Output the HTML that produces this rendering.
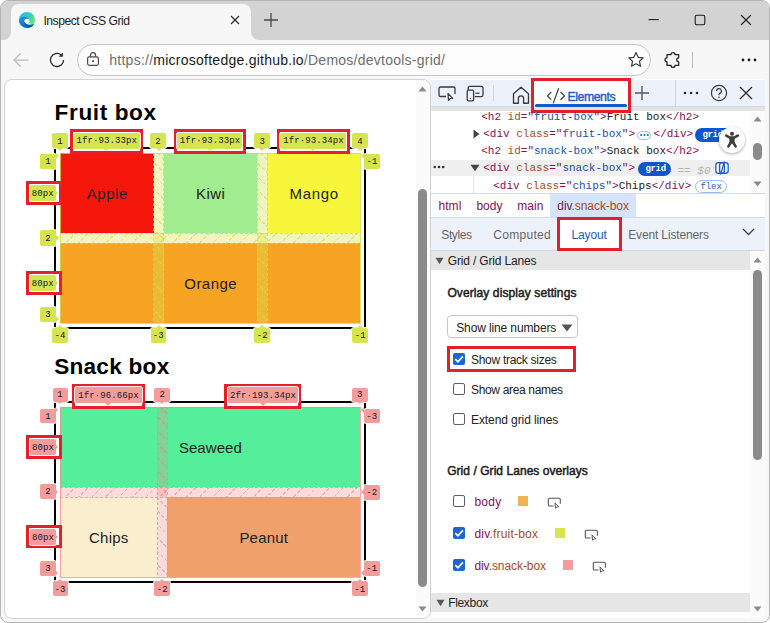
<!DOCTYPE html>
<html><head><meta charset="utf-8">
<style>
*{box-sizing:border-box}
html,body{margin:0;padding:0}
body{width:770px;height:623px;overflow:hidden;position:relative;background:#fff;font-family:"Liberation Sans",sans-serif;color:#1f1f1f}
.a{position:absolute}
.t{white-space:nowrap}
.tg{color:#8a0e55}.an{color:#a64b1e}.av{color:#1a50aa}
</style></head><body>

<div class="a" style="left:0.00px;top:0.00px;width:770.00px;height:623.00px;background:#f7f7f7;border:1px solid #b4b4b4;border-radius:8px"></div>
<div class="a" style="left:1.00px;top:1.00px;width:768.00px;height:39.00px;background:#d3d3d3;border-radius:7px 7px 0 0"></div>
<div class="a" style="left:11.00px;top:4.00px;width:240.00px;height:36.00px;background:#f7f7f7;border-radius:8px 8px 0 0"></div>
<div class="a" style="left:3.00px;top:32.00px;width:8.00px;height:8.00px;background:radial-gradient(circle at 0 0,#d3d3d3 7.5px,#f7f7f7 8.5px)"></div>
<div class="a" style="left:251.00px;top:32.00px;width:8.00px;height:8.00px;background:radial-gradient(circle at 100% 0,#d3d3d3 7.5px,#f7f7f7 8.5px)"></div>
<svg class="a" style="left:19px;top:12px" width="16" height="16" viewBox="0 0 16 16"><defs>
<linearGradient id="eg1" x1="0.1" y1="0.1" x2="0.9" y2="0.7"><stop offset="0" stop-color="#2ab8f2"/><stop offset="0.5" stop-color="#3cc8b8"/><stop offset="1" stop-color="#6be676"/></linearGradient>
<linearGradient id="eg2" x1="0" y1="0.2" x2="0.5" y2="1"><stop offset="0" stop-color="#1e8ee0"/><stop offset="1" stop-color="#1467c0"/></linearGradient>
</defs>
<circle cx="8" cy="8" r="8" fill="url(#eg1)"/>
<path d="M0.1 8.6C0.4 5.6 2.8 4.6 5.4 4.7C7.8 4.8 9.4 5.9 10 7.1L7.6 6.7C6 6.6 5.2 8 5.3 9.3C5.6 11.6 8.1 13 10.9 13C12.5 13 14 12.6 15.2 11.9C13.8 14.5 11.2 16 8 16C3.6 16 0.1 12.6 0.1 8.6Z" fill="url(#eg2)"/>
<path d="M5.3 9.3C5.6 11.6 8.1 13 10.9 13C12.5 13 14 12.6 15.2 11.9C13.9 13.8 11.8 14.9 9.4 14.9C6.8 14.9 5 12.3 5.3 9.3Z" fill="#0c4f9f" opacity="0.75"/>
<path d="M7.6 6.7C9.4 6.4 10.8 7.6 10.6 9.2C10.5 10.3 9.6 11 8.6 11C9.8 11.6 11.4 11.6 12.6 11.2C11.6 12.2 10.2 12.6 8.8 12.3C6.6 11.8 5.2 10.2 5.4 8.6C5.6 7.4 6.5 6.8 7.6 6.7Z" fill="#f2f6f8"/></svg>
<div class="a t" style="left:43.40px;top:13.07px;font-family:'Liberation Sans',sans-serif;font-size:12.2px;line-height:16px;color:#1f1f1f;font-weight:400;letter-spacing:-0.5px;">Inspect CSS Grid</div>
<svg class="a" style="left:230px;top:15px" width="10" height="10" viewBox="0 0 10 10"><path d="M1 1L9 9M9 1L1 9" stroke="#2b2b2b" stroke-width="1.15"/></svg>
<svg class="a" style="left:263px;top:12px" width="16" height="16" viewBox="0 0 16 16"><path d="M8 1V15M1 8H15" stroke="#4a4a4a" stroke-width="1.3"/></svg>
<svg class="a" style="left:648px;top:14px" width="12" height="12" viewBox="0 0 12 12"><path d="M0.5 5.6H10.8" stroke="#1f1f1f" stroke-width="1.1"/></svg>
<svg class="a" style="left:694px;top:14px" width="12" height="12" viewBox="0 0 12 12"><rect x="1.2" y="1.2" width="9.6" height="9.6" rx="1.6" fill="none" stroke="#1f1f1f" stroke-width="1.1"/></svg>
<svg class="a" style="left:740px;top:14px" width="12" height="12" viewBox="0 0 12 12"><path d="M1 1L11 11M11 1L1 11" stroke="#1f1f1f" stroke-width="1.1"/></svg>
<svg class="a" style="left:12px;top:52px" width="18" height="16" viewBox="0 0 18 16"><path d="M16.5 8H2M8.5 1.5L2 8L8.5 14.5" fill="none" stroke="#bcbcbc" stroke-width="1.25"/></svg>
<svg class="a" style="left:49px;top:51px" width="16" height="17" viewBox="0 0 16 17"><path d="M14.55 8.9A6.55 6.55 0 1 1 12.2 3.9" fill="none" stroke="#262626" stroke-width="1.3"/><path d="M13.7 1.9V5.4H10.2Z" fill="#262626" stroke="#262626" stroke-width="0.5" stroke-linejoin="round"/></svg>
<div class="a" style="left:77.00px;top:44.00px;width:574.00px;height:32.00px;border:1px solid #c7c7c7;border-radius:16px;background:#fdfdfd"></div>
<svg class="a" style="left:86px;top:51px" width="14" height="16" viewBox="0 0 14 16"><path d="M4.4 5.8V4.2A2.6 2.6 0 0 1 9.6 4.2V5.8" fill="none" stroke="#4a4a4a" stroke-width="1.2"/><rect x="1.6" y="5.8" width="10.8" height="8.6" rx="1.8" fill="none" stroke="#4a4a4a" stroke-width="1.2"/><rect x="6.1" y="9.2" width="1.8" height="1.8" fill="#4a4a4a"/></svg>
<div class="a t" style="left:109.30px;top:51.05px;font-family:'Liberation Sans',sans-serif;font-size:14px;line-height:18px;color:#6e6e6e;font-weight:400;letter-spacing:0.25px;">https://<span style="color:#1b1b1b">microsoftedge.github.io</span>/Demos/devtools-grid/</div>
<svg class="a" style="left:627px;top:51px" width="18" height="18" viewBox="0 0 18 18"><path d="M9 1.6L11.2 6.3L16.2 6.9L12.5 10.3L13.5 15.3L9 12.8L4.5 15.3L5.5 10.3L1.8 6.9L6.8 6.3Z" fill="none" stroke="#3a3a3a" stroke-width="1.2" stroke-linejoin="round"/></svg>
<svg class="a" style="left:663px;top:51px" width="18" height="18" viewBox="0 0 18 18"><path d="M4 3.6H8A2 2 0 0 1 12 3.6H15.7V6.8A2 2 0 0 0 15.7 10.8V14.4H12A2 2 0 0 1 8 14.4H4V10.8A2 2 0 0 1 4 6.8Z" fill="none" stroke="#1f1f1f" stroke-width="1.25" stroke-linejoin="round"/></svg>
<div class="a" style="left:692.00px;top:52.00px;width:1.00px;height:16.00px;background:#bdbdbd"></div>
<svg class="a" style="left:740px;top:56px" width="18" height="8" viewBox="0 0 18 8"><circle cx="3" cy="4" r="1.4" fill="#1f1f1f"/><circle cx="9" cy="4" r="1.4" fill="#1f1f1f"/><circle cx="15" cy="4" r="1.4" fill="#1f1f1f"/></svg>
<div class="a" style="left:4.00px;top:79.00px;width:427.00px;height:540.00px;background:#fff;border:1px solid #d2d2d2;border-radius:8px"></div>
<div class="a" style="left:431.00px;top:79.00px;width:334.00px;height:539.00px;background:#fff"></div>
<div class="a t" style="left:54.60px;top:98.07px;font-family:'Liberation Sans',sans-serif;font-size:22.6px;line-height:29px;color:#000;font-weight:700;letter-spacing:0.6px;">Fruit box</div>
<div class="a t" style="left:54.20px;top:352.17px;font-family:'Liberation Sans',sans-serif;font-size:22.6px;line-height:29px;color:#000;font-weight:700;letter-spacing:0.25px;">Snack box</div>
<div class="a" style="left:54.00px;top:147.00px;width:312.00px;height:181.50px;border:2px solid #000"></div>
<div class="a" style="left:60.40px;top:153.30px;width:93.30px;height:80.00px;background:#f5170b"></div>
<div class="a" style="left:163.70px;top:153.30px;width:93.40px;height:80.00px;background:#a1ec8e"></div>
<div class="a" style="left:267.10px;top:153.30px;width:93.40px;height:80.00px;background:#f8f63a"></div>
<div class="a" style="left:60.40px;top:243.30px;width:300.10px;height:80.00px;background:#f7a425"></div>
<div class="a" style="left:153.70px;top:153.30px;width:10.00px;height:170.00px;background:rgba(213,228,79,0.36)"></div>
<div class="a" style="left:153.70px;top:153.30px;width:10.00px;height:170.00px;background:repeating-linear-gradient(45deg,transparent 0 8.3px,rgba(205,222,70,0.6) 8.3px 9.5px);-webkit-mask-image:repeating-linear-gradient(-45deg,#000 0 3.5px,transparent 3.5px 5.5px)"></div>
<div class="a" style="left:153.20px;top:153.30px;width:1.00px;height:170.00px;background:repeating-linear-gradient(180deg,rgba(205,222,70,0.75) 0 3px,transparent 3px 5px)"></div>
<div class="a" style="left:163.20px;top:153.30px;width:1.00px;height:170.00px;background:repeating-linear-gradient(180deg,rgba(205,222,70,0.75) 0 3px,transparent 3px 5px)"></div>
<div class="a" style="left:257.10px;top:153.30px;width:10.00px;height:170.00px;background:rgba(213,228,79,0.36)"></div>
<div class="a" style="left:257.10px;top:153.30px;width:10.00px;height:170.00px;background:repeating-linear-gradient(45deg,transparent 0 8.3px,rgba(205,222,70,0.6) 8.3px 9.5px);-webkit-mask-image:repeating-linear-gradient(-45deg,#000 0 3.5px,transparent 3.5px 5.5px)"></div>
<div class="a" style="left:256.60px;top:153.30px;width:1.00px;height:170.00px;background:repeating-linear-gradient(180deg,rgba(205,222,70,0.75) 0 3px,transparent 3px 5px)"></div>
<div class="a" style="left:266.60px;top:153.30px;width:1.00px;height:170.00px;background:repeating-linear-gradient(180deg,rgba(205,222,70,0.75) 0 3px,transparent 3px 5px)"></div>
<div class="a" style="left:60.40px;top:233.30px;width:300.10px;height:10.00px;background:rgba(213,228,79,0.36)"></div>
<div class="a" style="left:60.40px;top:233.30px;width:300.10px;height:10.00px;background:repeating-linear-gradient(-45deg,transparent 0 8.3px,rgba(205,222,70,0.6) 8.3px 9.5px);-webkit-mask-image:repeating-linear-gradient(45deg,#000 0 3.5px,transparent 3.5px 5.5px)"></div>
<div class="a" style="left:60.40px;top:232.80px;width:300.10px;height:1.00px;background:repeating-linear-gradient(90deg,rgba(205,222,70,0.75) 0 3px,transparent 3px 5px)"></div>
<div class="a" style="left:60.40px;top:242.80px;width:300.10px;height:1.00px;background:repeating-linear-gradient(90deg,rgba(205,222,70,0.75) 0 3px,transparent 3px 5px)"></div>
<div class="a" style="left:59.90px;top:152.80px;width:301.10px;height:171.00px;border:1px solid rgba(205,222,70,0.75)"></div>
<div class="a t" style="left:-42.95px;width:300px;text-align:center;top:184.40px;font-family:'Liberation Sans',sans-serif;font-size:15px;line-height:20px;color:#222;font-weight:400;letter-spacing:0.6px;text-indent:0.6px;">Apple</div>
<div class="a t" style="left:60.40px;width:300px;text-align:center;top:184.40px;font-family:'Liberation Sans',sans-serif;font-size:15px;line-height:20px;color:#222;font-weight:400;letter-spacing:0.5px;text-indent:0.5px;">Kiwi</div>
<div class="a t" style="left:163.80px;width:300px;text-align:center;top:184.40px;font-family:'Liberation Sans',sans-serif;font-size:15px;line-height:20px;color:#222;font-weight:400;letter-spacing:0.7px;text-indent:0.7px;">Mango</div>
<div class="a t" style="left:60.45px;width:300px;text-align:center;top:274.40px;font-family:'Liberation Sans',sans-serif;font-size:15px;line-height:20px;color:#222;font-weight:400;letter-spacing:0.45px;text-indent:0.45px;">Orange</div>
<div class="a" style="left:54.00px;top:400.80px;width:312.00px;height:181.90px;border:2px solid #000"></div>
<div class="a" style="left:60.30px;top:407.30px;width:300.10px;height:80.00px;background:#55ef9c"></div>
<div class="a" style="left:60.30px;top:497.30px;width:96.70px;height:80.00px;background:#faeecf"></div>
<div class="a" style="left:167.00px;top:497.30px;width:193.40px;height:80.00px;background:#f0a06a"></div>
<div class="a" style="left:157.00px;top:407.30px;width:10.00px;height:170.00px;background:rgba(240,140,140,0.30)"></div>
<div class="a" style="left:157.00px;top:407.30px;width:10.00px;height:170.00px;background:repeating-linear-gradient(45deg,transparent 0 8.3px,rgba(235,125,125,0.5) 8.3px 9.5px);-webkit-mask-image:repeating-linear-gradient(-45deg,#000 0 3.5px,transparent 3.5px 5.5px)"></div>
<div class="a" style="left:156.50px;top:407.30px;width:1.00px;height:170.00px;background:repeating-linear-gradient(180deg,rgba(240,140,140,0.75) 0 3px,transparent 3px 5px)"></div>
<div class="a" style="left:166.50px;top:407.30px;width:1.00px;height:170.00px;background:repeating-linear-gradient(180deg,rgba(240,140,140,0.75) 0 3px,transparent 3px 5px)"></div>
<div class="a" style="left:60.30px;top:487.30px;width:300.10px;height:10.00px;background:rgba(240,140,140,0.30)"></div>
<div class="a" style="left:60.30px;top:487.30px;width:300.10px;height:10.00px;background:repeating-linear-gradient(-45deg,transparent 0 8.3px,rgba(235,125,125,0.5) 8.3px 9.5px);-webkit-mask-image:repeating-linear-gradient(45deg,#000 0 3.5px,transparent 3.5px 5.5px)"></div>
<div class="a" style="left:60.30px;top:486.80px;width:300.10px;height:1.00px;background:repeating-linear-gradient(90deg,rgba(240,140,140,0.75) 0 3px,transparent 3px 5px)"></div>
<div class="a" style="left:60.30px;top:496.80px;width:300.10px;height:1.00px;background:repeating-linear-gradient(90deg,rgba(240,140,140,0.75) 0 3px,transparent 3px 5px)"></div>
<div class="a" style="left:59.80px;top:406.80px;width:301.10px;height:171.00px;border:1px solid rgba(240,140,140,0.75)"></div>
<div class="a t" style="left:60.35px;width:300px;text-align:center;top:438.40px;font-family:'Liberation Sans',sans-serif;font-size:15px;line-height:20px;color:#222;font-weight:400;letter-spacing:0.05px;text-indent:0.05px;">Seaweed</div>
<div class="a t" style="left:-41.35px;width:300px;text-align:center;top:528.40px;font-family:'Liberation Sans',sans-serif;font-size:15px;line-height:20px;color:#222;font-weight:400;letter-spacing:0.2px;text-indent:0.2px;">Chips</div>
<div class="a t" style="left:113.70px;width:300px;text-align:center;top:528.40px;font-family:'Liberation Sans',sans-serif;font-size:15px;line-height:20px;color:#222;font-weight:400;letter-spacing:0.2px;text-indent:0.2px;">Peanut</div>
<div class="a" style="left:52.20px;top:133.20px;width:15.60px;height:15.30px;background:#d5e44f;border-radius:2px;box-shadow:0 0 0 1px rgba(255,255,255,0.9)"></div>
<div class="a t" style="left:-90.00px;width:300px;text-align:center;top:135.55px;font-family:'Liberation Mono',monospace;font-size:9px;line-height:12px;color:#1a1a1a;font-weight:400;letter-spacing:0.1px;text-indent:0.1px;">1</div>
<div class="a" style="left:57.20px;top:148.30px;width:0;height:0;border-left:3.2px solid transparent;border-right:3.2px solid transparent;border-top:3.2px solid #d5e44f"></div>
<div class="a" style="left:150.40px;top:133.20px;width:15.20px;height:15.30px;background:#d5e44f;border-radius:2px;box-shadow:0 0 0 1px rgba(255,255,255,0.9)"></div>
<div class="a t" style="left:8.00px;width:300px;text-align:center;top:135.55px;font-family:'Liberation Mono',monospace;font-size:9px;line-height:12px;color:#1a1a1a;font-weight:400;letter-spacing:0.1px;text-indent:0.1px;">2</div>
<div class="a" style="left:155.50px;top:148.30px;width:0;height:0;border-left:3.2px solid transparent;border-right:3.2px solid transparent;border-top:3.2px solid #d5e44f"></div>
<div class="a" style="left:254.30px;top:133.20px;width:15.60px;height:15.30px;background:#d5e44f;border-radius:2px;box-shadow:0 0 0 1px rgba(255,255,255,0.9)"></div>
<div class="a t" style="left:112.10px;width:300px;text-align:center;top:135.55px;font-family:'Liberation Mono',monospace;font-size:9px;line-height:12px;color:#1a1a1a;font-weight:400;letter-spacing:0.1px;text-indent:0.1px;">3</div>
<div class="a" style="left:258.90px;top:148.30px;width:0;height:0;border-left:3.2px solid transparent;border-right:3.2px solid transparent;border-top:3.2px solid #d5e44f"></div>
<div class="a" style="left:352.00px;top:133.20px;width:15.70px;height:15.30px;background:#d5e44f;border-radius:2px;box-shadow:0 0 0 1px rgba(255,255,255,0.9)"></div>
<div class="a t" style="left:209.85px;width:300px;text-align:center;top:135.55px;font-family:'Liberation Mono',monospace;font-size:9px;line-height:12px;color:#1a1a1a;font-weight:400;letter-spacing:0.1px;text-indent:0.1px;">4</div>
<div class="a" style="left:357.30px;top:148.30px;width:0;height:0;border-left:3.2px solid transparent;border-right:3.2px solid transparent;border-top:3.2px solid #d5e44f"></div>
<div class="a" style="left:52.00px;top:327.50px;width:16.00px;height:15.30px;background:#d5e44f;border-radius:2px;box-shadow:0 0 0 1px rgba(255,255,255,0.9)"></div>
<div class="a t" style="left:-90.00px;width:300px;text-align:center;top:329.85px;font-family:'Liberation Mono',monospace;font-size:9px;line-height:12px;color:#1a1a1a;font-weight:400;letter-spacing:0.1px;text-indent:0.1px;">-4</div>
<div class="a" style="left:57.20px;top:324.50px;width:0;height:0;border-left:3.2px solid transparent;border-right:3.2px solid transparent;border-bottom:3.2px solid #d5e44f"></div>
<div class="a" style="left:150.50px;top:327.50px;width:15.40px;height:15.30px;background:#d5e44f;border-radius:2px;box-shadow:0 0 0 1px rgba(255,255,255,0.9)"></div>
<div class="a t" style="left:8.20px;width:300px;text-align:center;top:329.85px;font-family:'Liberation Mono',monospace;font-size:9px;line-height:12px;color:#1a1a1a;font-weight:400;letter-spacing:0.1px;text-indent:0.1px;">-3</div>
<div class="a" style="left:155.50px;top:324.50px;width:0;height:0;border-left:3.2px solid transparent;border-right:3.2px solid transparent;border-bottom:3.2px solid #d5e44f"></div>
<div class="a" style="left:254.20px;top:327.50px;width:15.80px;height:15.30px;background:#d5e44f;border-radius:2px;box-shadow:0 0 0 1px rgba(255,255,255,0.9)"></div>
<div class="a t" style="left:112.10px;width:300px;text-align:center;top:329.85px;font-family:'Liberation Mono',monospace;font-size:9px;line-height:12px;color:#1a1a1a;font-weight:400;letter-spacing:0.1px;text-indent:0.1px;">-2</div>
<div class="a" style="left:258.90px;top:324.50px;width:0;height:0;border-left:3.2px solid transparent;border-right:3.2px solid transparent;border-bottom:3.2px solid #d5e44f"></div>
<div class="a" style="left:352.20px;top:327.50px;width:15.80px;height:15.30px;background:#d5e44f;border-radius:2px;box-shadow:0 0 0 1px rgba(255,255,255,0.9)"></div>
<div class="a t" style="left:210.10px;width:300px;text-align:center;top:329.85px;font-family:'Liberation Mono',monospace;font-size:9px;line-height:12px;color:#1a1a1a;font-weight:400;letter-spacing:0.1px;text-indent:0.1px;">-1</div>
<div class="a" style="left:357.30px;top:324.50px;width:0;height:0;border-left:3.2px solid transparent;border-right:3.2px solid transparent;border-bottom:3.2px solid #d5e44f"></div>
<div class="a" style="left:40.20px;top:154.00px;width:15.70px;height:15.30px;background:#d5e44f;border-radius:2px;box-shadow:0 0 0 1px rgba(255,255,255,0.9)"></div>
<div class="a t" style="left:-101.95px;width:300px;text-align:center;top:156.35px;font-family:'Liberation Mono',monospace;font-size:9px;line-height:12px;color:#1a1a1a;font-weight:400;letter-spacing:0.1px;text-indent:0.1px;">1</div>
<div class="a" style="left:55.60px;top:153.30px;width:0;height:0;border-top:3.2px solid transparent;border-bottom:3.2px solid transparent;border-left:3.2px solid #d5e44f"></div>
<div class="a" style="left:40.20px;top:230.40px;width:15.70px;height:15.30px;background:#d5e44f;border-radius:2px;box-shadow:0 0 0 1px rgba(255,255,255,0.9)"></div>
<div class="a t" style="left:-101.95px;width:300px;text-align:center;top:232.75px;font-family:'Liberation Mono',monospace;font-size:9px;line-height:12px;color:#1a1a1a;font-weight:400;letter-spacing:0.1px;text-indent:0.1px;">2</div>
<div class="a" style="left:55.60px;top:234.80px;width:0;height:0;border-top:3.2px solid transparent;border-bottom:3.2px solid transparent;border-left:3.2px solid #d5e44f"></div>
<div class="a" style="left:40.20px;top:306.60px;width:15.70px;height:15.30px;background:#d5e44f;border-radius:2px;box-shadow:0 0 0 1px rgba(255,255,255,0.9)"></div>
<div class="a t" style="left:-101.95px;width:300px;text-align:center;top:308.95px;font-family:'Liberation Mono',monospace;font-size:9px;line-height:12px;color:#1a1a1a;font-weight:400;letter-spacing:0.1px;text-indent:0.1px;">3</div>
<div class="a" style="left:55.60px;top:316.30px;width:0;height:0;border-top:3.2px solid transparent;border-bottom:3.2px solid transparent;border-left:3.2px solid #d5e44f"></div>
<div class="a" style="left:364.00px;top:154.00px;width:15.70px;height:15.30px;background:#d5e44f;border-radius:2px;box-shadow:0 0 0 1px rgba(255,255,255,0.9)"></div>
<div class="a t" style="left:221.85px;width:300px;text-align:center;top:156.35px;font-family:'Liberation Mono',monospace;font-size:9px;line-height:12px;color:#1a1a1a;font-weight:400;letter-spacing:0.1px;text-indent:0.1px;">-1</div>
<div class="a" style="left:361.20px;top:153.30px;width:0;height:0;border-top:3.2px solid transparent;border-bottom:3.2px solid transparent;border-right:3.2px solid #d5e44f"></div>
<div class="a" style="left:70.30px;top:129.10px;width:72.50px;height:24.90px;border:3px solid #e5202a;background:#fff"></div>
<div class="a" style="left:73.70px;top:132.80px;width:66.00px;height:15.80px;background:#d5e44f;border-radius:2px;box-shadow:0 0 0 1px rgba(255,255,255,0.9)"></div>
<div class="a t" style="left:-43.30px;width:300px;text-align:center;top:135.40px;font-family:'Liberation Mono',monospace;font-size:9px;line-height:12px;color:#1a1a1a;font-weight:400;letter-spacing:0.1px;text-indent:0.1px;">1fr·93.33px</div>
<div class="a" style="left:103.35px;top:148.10px;width:0;height:0;border-left:3.2px solid transparent;border-right:3.2px solid transparent;border-top:3.2px solid #d5e44f"></div>
<div class="a" style="left:174.00px;top:129.10px;width:71.50px;height:24.90px;border:3px solid #e5202a;background:#fff"></div>
<div class="a" style="left:177.40px;top:132.80px;width:65.00px;height:15.80px;background:#d5e44f;border-radius:2px;box-shadow:0 0 0 1px rgba(255,255,255,0.9)"></div>
<div class="a t" style="left:59.90px;width:300px;text-align:center;top:135.40px;font-family:'Liberation Mono',monospace;font-size:9px;line-height:12px;color:#1a1a1a;font-weight:400;letter-spacing:0.1px;text-indent:0.1px;">1fr·93.33px</div>
<div class="a" style="left:206.55px;top:148.10px;width:0;height:0;border-left:3.2px solid transparent;border-right:3.2px solid transparent;border-top:3.2px solid #d5e44f"></div>
<div class="a" style="left:277.00px;top:129.10px;width:72.60px;height:24.90px;border:3px solid #e5202a;background:#fff"></div>
<div class="a" style="left:280.40px;top:132.80px;width:66.10px;height:15.80px;background:#d5e44f;border-radius:2px;box-shadow:0 0 0 1px rgba(255,255,255,0.9)"></div>
<div class="a t" style="left:163.45px;width:300px;text-align:center;top:135.40px;font-family:'Liberation Mono',monospace;font-size:9px;line-height:12px;color:#1a1a1a;font-weight:400;letter-spacing:0.1px;text-indent:0.1px;">1fr·93.34px</div>
<div class="a" style="left:310.10px;top:148.10px;width:0;height:0;border-left:3.2px solid transparent;border-right:3.2px solid transparent;border-top:3.2px solid #d5e44f"></div>
<div class="a" style="left:26.10px;top:181.00px;width:35.50px;height:23.60px;border:3px solid #e5202a;background:#fff"></div>
<div class="a" style="left:30.00px;top:185.00px;width:25.60px;height:15.80px;background:#d5e44f;border-radius:2px;box-shadow:0 0 0 1px rgba(255,255,255,0.9)"></div>
<div class="a t" style="left:-107.20px;width:300px;text-align:center;top:187.60px;font-family:'Liberation Mono',monospace;font-size:9px;line-height:12px;color:#1a1a1a;font-weight:400;letter-spacing:0.1px;text-indent:0.1px;">80px</div>
<div class="a" style="left:55.40px;top:189.60px;width:0;height:0;border-top:3.2px solid transparent;border-bottom:3.2px solid transparent;border-left:3.2px solid #d5e44f"></div>
<div class="a" style="left:26.10px;top:271.00px;width:35.50px;height:23.60px;border:3px solid #e5202a;background:#fff"></div>
<div class="a" style="left:30.00px;top:275.00px;width:25.60px;height:15.80px;background:#d5e44f;border-radius:2px;box-shadow:0 0 0 1px rgba(255,255,255,0.9)"></div>
<div class="a t" style="left:-107.20px;width:300px;text-align:center;top:277.60px;font-family:'Liberation Mono',monospace;font-size:9px;line-height:12px;color:#1a1a1a;font-weight:400;letter-spacing:0.1px;text-indent:0.1px;">80px</div>
<div class="a" style="left:55.40px;top:279.60px;width:0;height:0;border-top:3.2px solid transparent;border-bottom:3.2px solid transparent;border-left:3.2px solid #d5e44f"></div>
<div class="a" style="left:52.50px;top:387.50px;width:15.00px;height:14.30px;background:#f39c9c;border-radius:2px;box-shadow:0 0 0 1px rgba(255,255,255,0.9)"></div>
<div class="a t" style="left:-90.00px;width:300px;text-align:center;top:389.35px;font-family:'Liberation Mono',monospace;font-size:9px;line-height:12px;color:#1a1a1a;font-weight:400;letter-spacing:0.1px;text-indent:0.1px;">1</div>
<div class="a" style="left:57.10px;top:401.30px;width:0;height:0;border-left:3.2px solid transparent;border-right:3.2px solid transparent;border-top:3.2px solid #f39c9c"></div>
<div class="a" style="left:154.30px;top:387.50px;width:15.60px;height:14.30px;background:#f39c9c;border-radius:2px;box-shadow:0 0 0 1px rgba(255,255,255,0.9)"></div>
<div class="a t" style="left:12.10px;width:300px;text-align:center;top:389.35px;font-family:'Liberation Mono',monospace;font-size:9px;line-height:12px;color:#1a1a1a;font-weight:400;letter-spacing:0.1px;text-indent:0.1px;">2</div>
<div class="a" style="left:158.80px;top:401.30px;width:0;height:0;border-left:3.2px solid transparent;border-right:3.2px solid transparent;border-top:3.2px solid #f39c9c"></div>
<div class="a" style="left:352.00px;top:387.50px;width:15.60px;height:14.30px;background:#f39c9c;border-radius:2px;box-shadow:0 0 0 1px rgba(255,255,255,0.9)"></div>
<div class="a t" style="left:209.80px;width:300px;text-align:center;top:389.35px;font-family:'Liberation Mono',monospace;font-size:9px;line-height:12px;color:#1a1a1a;font-weight:400;letter-spacing:0.1px;text-indent:0.1px;">3</div>
<div class="a" style="left:357.20px;top:401.30px;width:0;height:0;border-left:3.2px solid transparent;border-right:3.2px solid transparent;border-top:3.2px solid #f39c9c"></div>
<div class="a" style="left:52.50px;top:581.20px;width:15.00px;height:15.30px;background:#f39c9c;border-radius:2px;box-shadow:0 0 0 1px rgba(255,255,255,0.9)"></div>
<div class="a t" style="left:-90.00px;width:300px;text-align:center;top:583.55px;font-family:'Liberation Mono',monospace;font-size:9px;line-height:12px;color:#1a1a1a;font-weight:400;letter-spacing:0.1px;text-indent:0.1px;">-3</div>
<div class="a" style="left:57.10px;top:578.50px;width:0;height:0;border-left:3.2px solid transparent;border-right:3.2px solid transparent;border-bottom:3.2px solid #f39c9c"></div>
<div class="a" style="left:154.30px;top:581.20px;width:15.60px;height:15.30px;background:#f39c9c;border-radius:2px;box-shadow:0 0 0 1px rgba(255,255,255,0.9)"></div>
<div class="a t" style="left:12.10px;width:300px;text-align:center;top:583.55px;font-family:'Liberation Mono',monospace;font-size:9px;line-height:12px;color:#1a1a1a;font-weight:400;letter-spacing:0.1px;text-indent:0.1px;">-2</div>
<div class="a" style="left:158.80px;top:578.50px;width:0;height:0;border-left:3.2px solid transparent;border-right:3.2px solid transparent;border-bottom:3.2px solid #f39c9c"></div>
<div class="a" style="left:352.00px;top:581.20px;width:15.60px;height:15.30px;background:#f39c9c;border-radius:2px;box-shadow:0 0 0 1px rgba(255,255,255,0.9)"></div>
<div class="a t" style="left:209.80px;width:300px;text-align:center;top:583.55px;font-family:'Liberation Mono',monospace;font-size:9px;line-height:12px;color:#1a1a1a;font-weight:400;letter-spacing:0.1px;text-indent:0.1px;">-1</div>
<div class="a" style="left:357.20px;top:578.50px;width:0;height:0;border-left:3.2px solid transparent;border-right:3.2px solid transparent;border-bottom:3.2px solid #f39c9c"></div>
<div class="a" style="left:40.30px;top:408.50px;width:15.50px;height:14.80px;background:#f39c9c;border-radius:2px;box-shadow:0 0 0 1px rgba(255,255,255,0.9)"></div>
<div class="a t" style="left:-101.95px;width:300px;text-align:center;top:410.60px;font-family:'Liberation Mono',monospace;font-size:9px;line-height:12px;color:#1a1a1a;font-weight:400;letter-spacing:0.1px;text-indent:0.1px;">1</div>
<div class="a" style="left:55.40px;top:407.30px;width:0;height:0;border-top:3.2px solid transparent;border-bottom:3.2px solid transparent;border-left:3.2px solid #f39c9c"></div>
<div class="a" style="left:40.30px;top:484.30px;width:15.50px;height:14.80px;background:#f39c9c;border-radius:2px;box-shadow:0 0 0 1px rgba(255,255,255,0.9)"></div>
<div class="a t" style="left:-101.95px;width:300px;text-align:center;top:486.40px;font-family:'Liberation Mono',monospace;font-size:9px;line-height:12px;color:#1a1a1a;font-weight:400;letter-spacing:0.1px;text-indent:0.1px;">2</div>
<div class="a" style="left:55.40px;top:489.10px;width:0;height:0;border-top:3.2px solid transparent;border-bottom:3.2px solid transparent;border-left:3.2px solid #f39c9c"></div>
<div class="a" style="left:40.30px;top:560.80px;width:15.50px;height:14.80px;background:#f39c9c;border-radius:2px;box-shadow:0 0 0 1px rgba(255,255,255,0.9)"></div>
<div class="a t" style="left:-101.95px;width:300px;text-align:center;top:562.90px;font-family:'Liberation Mono',monospace;font-size:9px;line-height:12px;color:#1a1a1a;font-weight:400;letter-spacing:0.1px;text-indent:0.1px;">3</div>
<div class="a" style="left:55.40px;top:570.30px;width:0;height:0;border-top:3.2px solid transparent;border-bottom:3.2px solid transparent;border-left:3.2px solid #f39c9c"></div>
<div class="a" style="left:363.70px;top:408.50px;width:16.20px;height:14.80px;background:#f39c9c;border-radius:2px;box-shadow:0 0 0 1px rgba(255,255,255,0.9)"></div>
<div class="a t" style="left:221.80px;width:300px;text-align:center;top:410.60px;font-family:'Liberation Mono',monospace;font-size:9px;line-height:12px;color:#1a1a1a;font-weight:400;letter-spacing:0.1px;text-indent:0.1px;">-3</div>
<div class="a" style="left:361.20px;top:407.30px;width:0;height:0;border-top:3.2px solid transparent;border-bottom:3.2px solid transparent;border-right:3.2px solid #f39c9c"></div>
<div class="a" style="left:363.70px;top:484.80px;width:16.20px;height:14.80px;background:#f39c9c;border-radius:2px;box-shadow:0 0 0 1px rgba(255,255,255,0.9)"></div>
<div class="a t" style="left:221.80px;width:300px;text-align:center;top:486.90px;font-family:'Liberation Mono',monospace;font-size:9px;line-height:12px;color:#1a1a1a;font-weight:400;letter-spacing:0.1px;text-indent:0.1px;">-2</div>
<div class="a" style="left:361.20px;top:489.10px;width:0;height:0;border-top:3.2px solid transparent;border-bottom:3.2px solid transparent;border-right:3.2px solid #f39c9c"></div>
<div class="a" style="left:363.70px;top:560.80px;width:16.20px;height:14.80px;background:#f39c9c;border-radius:2px;box-shadow:0 0 0 1px rgba(255,255,255,0.9)"></div>
<div class="a t" style="left:221.80px;width:300px;text-align:center;top:562.90px;font-family:'Liberation Mono',monospace;font-size:9px;line-height:12px;color:#1a1a1a;font-weight:400;letter-spacing:0.1px;text-indent:0.1px;">-1</div>
<div class="a" style="left:361.20px;top:570.30px;width:0;height:0;border-top:3.2px solid transparent;border-bottom:3.2px solid transparent;border-right:3.2px solid #f39c9c"></div>
<div class="a" style="left:72.00px;top:383.60px;width:72.70px;height:25.20px;border:3px solid #e5202a;background:#fff"></div>
<div class="a" style="left:75.40px;top:387.30px;width:66.20px;height:16.10px;background:#f39c9c;border-radius:2px;box-shadow:0 0 0 1px rgba(255,255,255,0.9)"></div>
<div class="a t" style="left:-41.50px;width:300px;text-align:center;top:390.05px;font-family:'Liberation Mono',monospace;font-size:9px;line-height:12px;color:#1a1a1a;font-weight:400;letter-spacing:0.1px;text-indent:0.1px;">1fr·96.66px</div>
<div class="a" style="left:105.15px;top:403.20px;width:0;height:0;border-left:3.2px solid transparent;border-right:3.2px solid transparent;border-top:3.2px solid #f39c9c"></div>
<div class="a" style="left:224.30px;top:383.50px;width:77.00px;height:25.00px;border:3px solid #e5202a;background:#fff"></div>
<div class="a" style="left:227.70px;top:387.20px;width:70.50px;height:15.90px;background:#f39c9c;border-radius:2px;box-shadow:0 0 0 1px rgba(255,255,255,0.9)"></div>
<div class="a t" style="left:112.95px;width:300px;text-align:center;top:389.85px;font-family:'Liberation Mono',monospace;font-size:9px;line-height:12px;color:#1a1a1a;font-weight:400;letter-spacing:0.1px;text-indent:0.1px;">2fr·193.34px</div>
<div class="a" style="left:259.60px;top:402.90px;width:0;height:0;border-left:3.2px solid transparent;border-right:3.2px solid transparent;border-top:3.2px solid #f39c9c"></div>
<div class="a" style="left:26.30px;top:435.30px;width:35.30px;height:23.40px;border:3px solid #e5202a;background:#fff"></div>
<div class="a" style="left:30.20px;top:439.30px;width:25.40px;height:15.60px;background:#f39c9c;border-radius:2px;box-shadow:0 0 0 1px rgba(255,255,255,0.9)"></div>
<div class="a t" style="left:-107.10px;width:300px;text-align:center;top:441.80px;font-family:'Liberation Mono',monospace;font-size:9px;line-height:12px;color:#1a1a1a;font-weight:400;letter-spacing:0.1px;text-indent:0.1px;">80px</div>
<div class="a" style="left:55.40px;top:443.80px;width:0;height:0;border-top:3.2px solid transparent;border-bottom:3.2px solid transparent;border-left:3.2px solid #f39c9c"></div>
<div class="a" style="left:26.30px;top:525.30px;width:35.30px;height:23.10px;border:3px solid #e5202a;background:#fff"></div>
<div class="a" style="left:30.20px;top:529.30px;width:25.40px;height:15.30px;background:#f39c9c;border-radius:2px;box-shadow:0 0 0 1px rgba(255,255,255,0.9)"></div>
<div class="a t" style="left:-107.10px;width:300px;text-align:center;top:531.65px;font-family:'Liberation Mono',monospace;font-size:9px;line-height:12px;color:#1a1a1a;font-weight:400;letter-spacing:0.1px;text-indent:0.1px;">80px</div>
<div class="a" style="left:55.40px;top:533.65px;width:0;height:0;border-top:3.2px solid transparent;border-bottom:3.2px solid transparent;border-left:3.2px solid #f39c9c"></div>
<div class="a" style="left:415.50px;top:80.00px;width:14.50px;height:538.00px;background:#fbfbfb;border-radius:0 7px 7px 0"></div>
<svg class="a" style="left:418px;top:86px" width="9" height="6" viewBox="0 0 9 6"><path d="M0.5 5.5H8.5L4.5 0.5Z" fill="#8a8a8a"/></svg>
<svg class="a" style="left:418px;top:606px" width="9" height="6" viewBox="0 0 9 6"><path d="M0.5 0.5H8.5L4.5 5.5Z" fill="#8a8a8a"/></svg>
<div class="a" style="left:418.30px;top:189.40px;width:8.70px;height:397.60px;border-radius:4.5px;background:#8a8a8a"></div>
<div class="a" style="left:431.00px;top:80.00px;width:334.00px;height:26.00px;background:#edf2fa"></div>
<div class="a" style="left:431.00px;top:106.00px;width:334.00px;height:1.00px;background:#c9d9f1"></div>
<div class="a" style="left:431.00px;top:107.00px;width:334.00px;height:4.00px;background:#e3e3e3"></div>
<svg class="a" style="left:437px;top:85px" width="20" height="17" viewBox="0 0 20 17"><path d="M9 11.5H3.5A1.5 1.5 0 0 1 2 10V3.5A1.5 1.5 0 0 1 3.5 2H16.5A1.5 1.5 0 0 1 18 3.5V9" fill="none" stroke="#3b3b3b" stroke-width="1.3"/><path d="M11 8.5L11.5 15.5L13.2 13.5L15.8 13.3Z" fill="none" stroke="#3b3b3b" stroke-width="1.2" stroke-linejoin="round"/></svg>
<svg class="a" style="left:465px;top:84px" width="20" height="18" viewBox="0 0 20 18"><path d="M3.2 6V3.8A1.5 1.5 0 0 1 4.7 2.3H16.5A1.5 1.5 0 0 1 18 3.8V11.1A1.5 1.5 0 0 1 16.5 12.6H9.8" fill="none" stroke="#3b3b3b" stroke-width="1.3"/><rect x="2.2" y="6.1" width="6.4" height="10.8" rx="1.4" fill="none" stroke="#3b3b3b" stroke-width="1.3"/><path d="M10.4 9.2H14.6" stroke="#3b3b3b" stroke-width="1.2"/><circle cx="5.4" cy="14.6" r="0.7" fill="#3b3b3b"/></svg>
<div class="a" style="left:493.00px;top:85.00px;width:1.00px;height:16.00px;background:#c9d6ea"></div>
<svg class="a" style="left:511px;top:85px" width="20" height="20" viewBox="0 0 20 20"><path d="M2.5 18.2V8.8L10 2.2L17.5 8.8V18.2H12.6V13.4A2.6 2.6 0 0 0 7.4 13.4V18.2Z" fill="none" stroke="#3b3b3b" stroke-width="1.35" stroke-linejoin="round"/></svg>
<div class="a" style="left:534.00px;top:81.00px;width:94.00px;height:25.00px;background:#fff"></div>
<svg class="a" style="left:546px;top:86px" width="20" height="20" viewBox="0 0 20 20"><path d="M5.2 6L1.5 9.9L5.2 13.7M14.6 6L18.5 9.9L14.6 13.7M12.7 2.3L7.2 17.4" fill="none" stroke="#3a3a3a" stroke-width="1.2"/></svg>
<div class="a t" style="left:567.50px;top:89.44px;font-family:'Liberation Sans',sans-serif;font-size:12.3px;line-height:16px;color:#1a5fc6;font-weight:400;letter-spacing:-0.45px;-webkit-text-stroke:0.4px #1a5fc6">Elements</div>
<div class="a" style="left:535.00px;top:104.00px;width:92.00px;height:3.00px;border-radius:2px;background:#1459c8"></div>
<div class="a" style="left:531.00px;top:78.00px;width:99.50px;height:34.50px;border:3px solid #e2202a"></div>
<svg class="a" style="left:634px;top:85px" width="16" height="16" viewBox="0 0 16 16"><path d="M8 1V15M1 8H15" stroke="#5a5a5a" stroke-width="1.4"/></svg>
<div class="a" style="left:675.00px;top:80.00px;width:1.00px;height:26.00px;background:#c9d6ea"></div>
<svg class="a" style="left:682px;top:89px" width="18" height="8" viewBox="0 0 18 8"><circle cx="3" cy="4" r="1.3" fill="#2a2a2a"/><circle cx="9" cy="4" r="1.3" fill="#2a2a2a"/><circle cx="15" cy="4" r="1.3" fill="#2a2a2a"/></svg>
<svg class="a" style="left:710px;top:84px" width="18" height="18" viewBox="0 0 18 18"><circle cx="9" cy="9" r="7.6" fill="none" stroke="#3b3b3b" stroke-width="1.2"/><path d="M6.6 7A2.4 2.4 0 1 1 9.8 9.3C9.2 9.6 9 10 9 10.8V11.2" fill="none" stroke="#3b3b3b" stroke-width="1.2"/><circle cx="9" cy="13.3" r="0.8" fill="#3b3b3b"/></svg>
<svg class="a" style="left:739px;top:86px" width="14" height="14" viewBox="0 0 14 14"><path d="M1 1L13 13M13 1L1 13" stroke="#2a2a2a" stroke-width="1.3"/></svg>
<div class="a" style="left:431.00px;top:159.50px;width:319.00px;height:16.00px;background:#efefef"></div>
<div class="a" style="left:473.00px;top:175.50px;width:1.00px;height:17.50px;background:#e6e6e6"></div>
<div class="a t" style="left:481.20px;top:109.77px;font-family:'Liberation Mono',monospace;font-size:11px;line-height:14px;color:#222;font-weight:400;letter-spacing:0px;"><span class="tg">&lt;h2</span> <span class="an">id</span><span class="tg">="</span><span class="av">fruit-box</span><span class="tg">"&gt;</span>Fruit box<span class="tg">&lt;/h2&gt;</span></div>
<div class="a t" style="left:483.20px;top:127.27px;font-family:'Liberation Mono',monospace;font-size:11px;line-height:14px;color:#222;font-weight:400;letter-spacing:0px;"><span class="tg">&lt;div</span> <span class="an">class</span><span class="tg">="</span><span class="av">fruit-box</span><span class="tg">"&gt;</span><span style="display:inline-block;width:18.5px"></span><span class="tg">&lt;/div&gt;</span></div>
<div class="a t" style="left:481.20px;top:144.47px;font-family:'Liberation Mono',monospace;font-size:11px;line-height:14px;color:#222;font-weight:400;letter-spacing:0px;"><span class="tg">&lt;h2</span> <span class="an">id</span><span class="tg">="</span><span class="av">snack-box</span><span class="tg">"&gt;</span>Snack box<span class="tg">&lt;/h2&gt;</span></div>
<div class="a t" style="left:483.20px;top:161.37px;font-family:'Liberation Mono',monospace;font-size:11px;line-height:14px;color:#222;font-weight:400;letter-spacing:0px;"><span class="tg">&lt;div</span> <span class="an">class</span><span class="tg">="</span><span class="av">snack-box</span><span class="tg">"&gt;</span></div>
<div class="a t" style="left:493.20px;top:178.57px;font-family:'Liberation Mono',monospace;font-size:11px;line-height:14px;color:#222;font-weight:400;letter-spacing:0px;"><span class="tg">&lt;div</span> <span class="an">class</span><span class="tg">="</span><span class="av">chips</span><span class="tg">"&gt;</span>Chips<span class="tg">&lt;/div&gt;</span></div>
<svg class="a" style="left:473px;top:129px" width="7" height="10" viewBox="0 0 7 10"><path d="M0.5 0.5L6.5 5L0.5 9.5Z" fill="#444"/></svg>
<svg class="a" style="left:470px;top:164px" width="10" height="8" viewBox="0 0 10 8"><path d="M0.5 0.8H9.5L5 7.2Z" fill="#444"/></svg>
<svg class="a" style="left:433px;top:165px" width="12" height="4" viewBox="0 0 12 4"><circle cx="1.8" cy="2" r="1.3" fill="#333"/><circle cx="6" cy="2" r="1.3" fill="#333"/><circle cx="10.2" cy="2" r="1.3" fill="#333"/></svg>
<div class="a" style="left:637.30px;top:130.50px;width:13.40px;height:9.30px;border:1px solid #9dbcf0;border-radius:5px;background:#fff"></div>
<svg class="a" style="left:639px;top:133px" width="11" height="4" viewBox="0 0 11 4"><circle cx="2.2" cy="2" r="1.05" fill="#1a5fc6"/><circle cx="5.5" cy="2" r="1.05" fill="#1a5fc6"/><circle cx="8.8" cy="2" r="1.05" fill="#1a5fc6"/></svg>
<div class="a" style="left:695.00px;top:128.00px;width:40.00px;height:14.00px;border-radius:7px;background:#0b57d0"></div>
<div class="a t" style="left:702.50px;top:129.20px;font-family:'Liberation Mono',monospace;font-size:9px;line-height:12px;color:#fff;font-weight:700;letter-spacing:-0.35px;">grid</div>
<div class="a" style="left:637.80px;top:161.90px;width:33.50px;height:14.00px;border-radius:7px;background:#0b57d0"></div>
<div class="a t" style="left:645.50px;top:163.10px;font-family:'Liberation Mono',monospace;font-size:9px;line-height:12px;color:#fff;font-weight:700;letter-spacing:-0.35px;">grid</div>
<div class="a t" style="left:677.50px;top:163.57px;font-family:'Liberation Mono',monospace;font-size:11px;line-height:14px;color:#b4b4b4;font-weight:400;letter-spacing:0px;font-style:italic">== $0</div>
<svg class="a" style="left:714px;top:160px" width="16" height="16" viewBox="0 0 16 16"><rect x="1.8" y="2.6" width="8.6" height="10.8" rx="2.6" fill="none" stroke="#1a5fc6" stroke-width="1.25"/><rect x="5.6" y="2.6" width="8.6" height="10.8" rx="2.6" fill="none" stroke="#1a5fc6" stroke-width="1.25"/><path d="M10.5 1.5L6.5 14.5" stroke="#1a5fc6" stroke-width="1.2"/></svg>
<div class="a" style="left:694.50px;top:180.30px;width:32.20px;height:12.60px;border:1px solid #9dbcf0;border-radius:7px;background:#fff"></div>
<div class="a t" style="left:700.50px;top:181.20px;font-family:'Liberation Mono',monospace;font-size:9px;line-height:12px;color:#1a5fc6;font-weight:400;letter-spacing:-0.1px;">flex</div>
<div class="a" style="left:719.00px;top:126.60px;width:26.00px;height:26.00px;border-radius:13px;background:#fff;box-shadow:0 1px 3px rgba(0,0,0,.35)"></div>
<svg class="a" style="left:723px;top:130px" width="18" height="18" viewBox="0 0 18 18"><circle cx="9" cy="3.8" r="2" fill="#3d3d3d"/><path d="M3.2 5.6L7 7.6H11L14.8 5.6M7.8 12.5L5.4 16.4M10.2 12.5L12.6 16.4" fill="none" stroke="#3d3d3d" stroke-width="2.6" stroke-linecap="round" stroke-linejoin="round"/><path d="M6.4 7.3H11.6V13.3H6.4Z" fill="#3d3d3d"/></svg>
<div class="a" style="left:750.00px;top:111.00px;width:15.00px;height:82.00px;background:#fbfbfb"></div>
<svg class="a" style="left:753px;top:116px" width="9" height="6" viewBox="0 0 9 6"><path d="M0.5 5.5H8.5L4.5 0.5Z" fill="#8a8a8a"/></svg>
<svg class="a" style="left:753px;top:181px" width="9" height="6" viewBox="0 0 9 6"><path d="M0.5 0.5H8.5L4.5 5.5Z" fill="#8a8a8a"/></svg>
<div class="a" style="left:753.00px;top:143.00px;width:9.00px;height:17.00px;border-radius:4.5px;background:#8a8a8a"></div>
<div class="a" style="left:431.00px;top:193.00px;width:334.00px;height:1.00px;background:#cfdcf2"></div>
<div class="a" style="left:550.00px;top:194.00px;width:86.00px;height:23.00px;background:#d6e4fb"></div>
<div class="a" style="left:431.00px;top:216.50px;width:334.00px;height:1.00px;background:#cfdcf2"></div>
<div class="a t" style="left:438.40px;top:198.24px;font-family:'Liberation Sans',sans-serif;font-size:12px;line-height:16px;color:#8a0e55;font-weight:400;letter-spacing:0.1px;">html</div>
<div class="a t" style="left:476.40px;top:198.24px;font-family:'Liberation Sans',sans-serif;font-size:12px;line-height:16px;color:#8a0e55;font-weight:400;letter-spacing:0.05px;">body</div>
<div class="a t" style="left:517.30px;top:198.24px;font-family:'Liberation Sans',sans-serif;font-size:12px;line-height:16px;color:#8a0e55;font-weight:400;letter-spacing:0px;">main</div>
<div class="a t" style="left:557.30px;top:198.24px;font-family:'Liberation Sans',sans-serif;font-size:12px;line-height:16px;color:#8a0e55;font-weight:400;letter-spacing:-0.07px;">div<span style="color:#a64b1e">.snack-box</span></div>
<div class="a" style="left:431.00px;top:217.50px;width:334.00px;height:32.50px;background:#edf2fa"></div>
<div class="a" style="left:431.00px;top:250.00px;width:334.00px;height:1.00px;background:#c9d9f1"></div>
<div class="a" style="left:557.00px;top:217.00px;width:65.00px;height:34.00px;background:#fff;border:3px solid #e2202a"></div>
<div class="a t" style="left:441.30px;top:227.34px;font-family:'Liberation Sans',sans-serif;font-size:12px;line-height:16px;color:#666666;font-weight:400;letter-spacing:-0.4px;">Styles</div>
<div class="a t" style="left:493.30px;top:227.34px;font-family:'Liberation Sans',sans-serif;font-size:12px;line-height:16px;color:#666666;font-weight:400;letter-spacing:0.3px;">Computed</div>
<div class="a t" style="left:571.40px;top:227.34px;font-family:'Liberation Sans',sans-serif;font-size:12px;line-height:16px;color:#1a5fc6;font-weight:400;letter-spacing:-0.12px;">Layout</div>
<div class="a t" style="left:628.20px;top:227.34px;font-family:'Liberation Sans',sans-serif;font-size:12px;line-height:16px;color:#666666;font-weight:400;letter-spacing:-0.14px;">Event Listeners</div>
<svg class="a" style="left:742px;top:228px" width="13" height="8" viewBox="0 0 13 8"><path d="M1 1L6.5 6.5L12 1" fill="none" stroke="#444" stroke-width="1.3"/></svg>
<div class="a" style="left:431.00px;top:251.00px;width:319.00px;height:19.00px;background:#e6e6e6"></div>
<svg class="a" style="left:435px;top:257px" width="9" height="8" viewBox="0 0 9 8"><path d="M0.5 0.8H8.5L4.5 7.2Z" fill="#5a5a5a"/></svg>
<div class="a t" style="left:447.80px;top:253.34px;font-family:'Liberation Sans',sans-serif;font-size:12px;line-height:16px;color:#222;font-weight:400;letter-spacing:-0.16px;">Grid / Grid Lanes</div>
<div class="a" style="left:750.00px;top:251.00px;width:15.00px;height:367.00px;background:#fbfbfb"></div>
<svg class="a" style="left:753px;top:257px" width="9" height="6" viewBox="0 0 9 6"><path d="M0.5 5.5H8.5L4.5 0.5Z" fill="#8a8a8a"/></svg>
<svg class="a" style="left:753px;top:606px" width="9" height="6" viewBox="0 0 9 6"><path d="M0.5 0.5H8.5L4.5 5.5Z" fill="#8a8a8a"/></svg>
<div class="a" style="left:753.00px;top:270.00px;width:9.00px;height:190.00px;border-radius:4.5px;background:#8a8a8a"></div>
<div class="a t" style="left:447.40px;top:284.54px;font-family:'Liberation Sans',sans-serif;font-size:12px;line-height:16px;color:#222;font-weight:400;letter-spacing:0.1px;-webkit-text-stroke:0.5px #222">Overlay display settings</div>
<div class="a" style="left:447.30px;top:315.40px;width:130.30px;height:23.10px;border:1px solid #c6c6c6;border-radius:4px;background:#fff"></div>
<div class="a t" style="left:456.20px;top:319.94px;font-family:'Liberation Sans',sans-serif;font-size:12px;line-height:16px;color:#222;font-weight:400;letter-spacing:-0.12px;">Show line numbers</div>
<svg class="a" style="left:561px;top:324px" width="12" height="8" viewBox="0 0 12 8"><path d="M0.5 0.5H11.5L6 7.5Z" fill="#555"/></svg>
<div class="a" style="left:446.50px;top:346.20px;width:129.50px;height:25.50px;border:3px solid #e2202a"></div>
<div class="a" style="left:453.00px;top:353.20px;width:12.00px;height:12.00px;border-radius:2px;background:#1a66d2"></div>
<svg class="a" style="left:453px;top:353px" width="12" height="12" viewBox="0 0 12 12"><path d="M2.3 6.2L4.9 8.8L9.9 3.3" fill="none" stroke="#fff" stroke-width="1.8"/></svg>
<div class="a t" style="left:471.00px;top:351.94px;font-family:'Liberation Sans',sans-serif;font-size:12px;line-height:16px;color:#222;font-weight:400;letter-spacing:-0.28px;">Show track sizes</div>
<div class="a" style="left:453.00px;top:383.20px;width:12.00px;height:12.00px;border-radius:2px;border:1px solid #5f5f5f;background:#fff"></div>
<div class="a t" style="left:471.00px;top:382.14px;font-family:'Liberation Sans',sans-serif;font-size:12px;line-height:16px;color:#222;font-weight:400;letter-spacing:-0.34px;">Show area names</div>
<div class="a" style="left:453.00px;top:413.40px;width:12.00px;height:12.00px;border-radius:2px;border:1px solid #5f5f5f;background:#fff"></div>
<div class="a t" style="left:471.00px;top:412.04px;font-family:'Liberation Sans',sans-serif;font-size:12px;line-height:16px;color:#222;font-weight:400;letter-spacing:-0.09px;">Extend grid lines</div>
<div class="a t" style="left:447.20px;top:462.74px;font-family:'Liberation Sans',sans-serif;font-size:12px;line-height:16px;color:#222;font-weight:400;letter-spacing:0.05px;-webkit-text-stroke:0.5px #222">Grid / Grid Lanes overlays</div>
<div class="a" style="left:453.00px;top:495.20px;width:12.00px;height:12.00px;border-radius:2px;border:1px solid #5f5f5f;background:#fff"></div>
<div class="a t" style="left:474.40px;top:494.14px;font-family:'Liberation Sans',sans-serif;font-size:12px;line-height:16px;color:#8a0e55;font-weight:400;letter-spacing:0.25px;">body</div>
<div class="a" style="left:517.80px;top:496.30px;width:10.00px;height:9.50px;background:#f0b452"></div>
<svg class="a" style="left:547px;top:497px" width="14" height="12" viewBox="0 0 14 12"><path d="M6.5 9H2.6A1.3 1.3 0 0 1 1.3 7.7V2.6A1.3 1.3 0 0 1 2.6 1.3H12A1.3 1.3 0 0 1 13.3 2.6V6.8" fill="none" stroke="#555" stroke-width="1.1"/><path d="M8 5.8L8.5 11.3L9.8 10L11.8 9.8Z" fill="none" stroke="#555" stroke-width="1" stroke-linejoin="round"/></svg>
<div class="a" style="left:453.00px;top:527.20px;width:12.00px;height:12.00px;border-radius:2px;background:#1a66d2"></div>
<svg class="a" style="left:453px;top:527px" width="12" height="12" viewBox="0 0 12 12"><path d="M2.3 6.2L4.9 8.8L9.9 3.3" fill="none" stroke="#fff" stroke-width="1.8"/></svg>
<div class="a t" style="left:474.40px;top:526.14px;font-family:'Liberation Sans',sans-serif;font-size:12px;line-height:16px;color:#8a0e55;font-weight:400;letter-spacing:0.2px;">div<span style="color:#a64b1e">.fruit-box</span></div>
<div class="a" style="left:555.00px;top:528.30px;width:10.00px;height:9.50px;background:#d8e54e"></div>
<svg class="a" style="left:584px;top:529px" width="14" height="12" viewBox="0 0 14 12"><path d="M6.5 9H2.6A1.3 1.3 0 0 1 1.3 7.7V2.6A1.3 1.3 0 0 1 2.6 1.3H12A1.3 1.3 0 0 1 13.3 2.6V6.8" fill="none" stroke="#555" stroke-width="1.1"/><path d="M8 5.8L8.5 11.3L9.8 10L11.8 9.8Z" fill="none" stroke="#555" stroke-width="1" stroke-linejoin="round"/></svg>
<div class="a" style="left:453.00px;top:559.20px;width:12.00px;height:12.00px;border-radius:2px;background:#1a66d2"></div>
<svg class="a" style="left:453px;top:559px" width="12" height="12" viewBox="0 0 12 12"><path d="M2.3 6.2L4.9 8.8L9.9 3.3" fill="none" stroke="#fff" stroke-width="1.8"/></svg>
<div class="a t" style="left:474.40px;top:558.14px;font-family:'Liberation Sans',sans-serif;font-size:12px;line-height:16px;color:#8a0e55;font-weight:400;letter-spacing:-0.07px;">div<span style="color:#a64b1e">.snack-box</span></div>
<div class="a" style="left:563.10px;top:560.30px;width:9.90px;height:9.50px;background:#f29e9e"></div>
<svg class="a" style="left:592px;top:561px" width="14" height="12" viewBox="0 0 14 12"><path d="M6.5 9H2.6A1.3 1.3 0 0 1 1.3 7.7V2.6A1.3 1.3 0 0 1 2.6 1.3H12A1.3 1.3 0 0 1 13.3 2.6V6.8" fill="none" stroke="#555" stroke-width="1.1"/><path d="M8 5.8L8.5 11.3L9.8 10L11.8 9.8Z" fill="none" stroke="#555" stroke-width="1" stroke-linejoin="round"/></svg>
<div class="a" style="left:431.00px;top:593.00px;width:319.00px;height:19.00px;background:#e6e6e6"></div>
<svg class="a" style="left:436px;top:599px" width="9" height="8" viewBox="0 0 9 8"><path d="M0.5 0.8H8.5L4.5 7.2Z" fill="#5a5a5a"/></svg>
<div class="a t" style="left:448.20px;top:595.14px;font-family:'Liberation Sans',sans-serif;font-size:12px;line-height:16px;color:#222;font-weight:400;letter-spacing:-0.33px;">Flexbox</div>
</body></html>
